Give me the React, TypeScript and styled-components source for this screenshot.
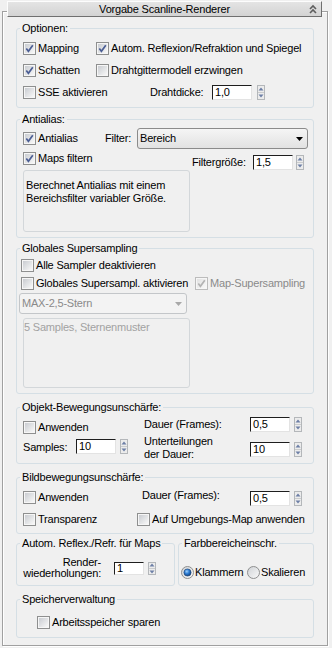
import React, { useId } from 'react';
import styled, { createGlobalStyle } from 'styled-components';

const GlobalStyle = createGlobalStyle`
  html, body {
    margin: 0;
    padding: 0;
    background: #f0f0f0;
  }
  body {
    font-family: "Liberation Sans", Arial, sans-serif;
    font-size: 11px;
    line-height: 13px;
    letter-spacing: -0.2px;
    color: #000;
  }
  * {
    box-sizing: border-box;
  }
`;

const Page = styled.div`
  width: 332px;
  height: 648px;
  padding-top: 1px;
  overflow: hidden;
`;

const Header = styled.div`
  position: relative;
  z-index: 1;
  display: grid;
  grid-template-columns: 1fr auto 1fr;
  align-items: center;
  height: 16px;
  margin: 0 10px 0 7px;
  padding: 0 4px;
  border: 1px solid;
  border-color: #fdfdfd #6f6f6f #6f6f6f #fdfdfd;
  background: linear-gradient(#e4e4e4, #d3d3d3);
`;

const HeaderTitle = styled.span`
  grid-column: 2;
  white-space: nowrap;
`;

const CollapseIcon = styled.svg`
  grid-column: 3;
  justify-self: end;
`;

const Frame = styled.div`
  margin: -6px 4px 0 2px;
  padding: 10px 13px 7px;
  border: 1px solid #a0a0a0;
  box-shadow: 1px 1px 0 #fff, inset 1px 1px 0 #fff;
`;

const Group = styled.fieldset<{ $mt?: number; $pb?: number; $w?: number }>`
  margin: ${({ $mt = 0 }) => $mt}px 0 0;
  padding: 0 0 ${({ $pb = 0 }) => $pb}px;
  width: ${({ $w }) => ($w ? `${$w}px` : 'auto')};
  min-width: 0;
  border: 1px solid #d5dfe5;
  border-radius: 3px;
`;

const Legend = styled.legend`
  margin-left: 3px;
  padding: 0 2px;
  line-height: 13px;
  white-space: nowrap;
`;

const Pair = styled.div`
  display: flex;
  gap: 3px;
  margin-top: 3px;
`;

const Row = styled.div<{ $h: number; $mt?: number; $pl?: number; $top?: boolean; $gap?: number }>`
  display: flex;
  align-items: ${({ $top }) => ($top ? 'flex-start' : 'center')};
  gap: ${({ $gap = 0 }) => $gap}px;
  height: ${({ $h }) => $h}px;
  margin-top: ${({ $mt = 0 }) => $mt}px;
  padding-left: ${({ $pl = 6 }) => $pl}px;
`;

const Cell = styled.div<{ $w?: number; $mt?: number; $right?: boolean }>`
  display: flex;
  align-items: center;
  justify-content: ${({ $right }) => ($right ? 'flex-end' : 'flex-start')};
  flex: none;
  width: ${({ $w }) => ($w ? `${$w}px` : 'auto')};
  margin-top: ${({ $mt = 0 }) => $mt}px;
  white-space: nowrap;
`;

const MultiLine = styled.span<{ $lh?: number; $right?: boolean }>`
  display: block;
  line-height: ${({ $lh = 13 }) => $lh}px;
  text-align: ${({ $right }) => ($right ? 'right' : 'left')};
`;

const ToggleLabel = styled.label<{ $disabled?: boolean; $gap?: number }>`
  display: inline-flex;
  align-items: center;
  gap: ${({ $gap = 2 }) => $gap}px;
  color: ${({ $disabled }) => ($disabled ? '#8a8a8a' : '#000')};
  white-space: nowrap;
`;

const NumField = styled.div<{ $w: number; $h: number }>`
  display: flex;
  align-items: center;
  width: ${({ $w }) => $w}px;
  height: ${({ $h }) => $h}px;
  padding-left: 2px;
  background: #fff;
  border: 1px solid;
  border-color: #1e1e1e #e3e3e3 #e3e3e3 #1e1e1e;
  line-height: 13px;
`;

const SpinWrap = styled.div<{ $gap: number }>`
  display: flex;
  align-items: center;
  gap: ${({ $gap }) => $gap}px;
`;

const Select = styled.div<{ $w: number; $disabled?: boolean }>`
  display: flex;
  align-items: center;
  justify-content: space-between;
  width: ${({ $w }) => $w}px;
  height: 21px;
  padding: 0 4px 0 2px;
  border: 1px solid ${({ $disabled }) => ($disabled ? '#c3c6c9' : '#8b8b8b')};
  border-radius: 3px;
  background: ${({ $disabled }) => ($disabled ? '#f3f3f3' : 'linear-gradient(#f5f5f5, #e2e2e2)')};
  color: ${({ $disabled }) => ($disabled ? '#8a8a8a' : '#000')};
`;

const InfoBox = styled.div<{ $h: number; $mt?: number; $pt: number; $pl: number; $disabled?: boolean }>`
  width: 167px;
  height: ${({ $h }) => $h}px;
  margin: ${({ $mt = 0 }) => $mt}px 0 0 6px;
  padding: ${({ $pt }) => $pt}px 2px 0 ${({ $pl }) => $pl}px;
  border: 1px solid #d3d7da;
  border-radius: 3px;
  color: ${({ $disabled }) => ($disabled ? '#a2a2a2' : '#000')};
  line-height: 13px;
`;

const cleanId = (id: string) => 'g' + id.replace(/[^a-zA-Z0-9]/g, '');

const CheckBox: React.FC<{ checked?: boolean; disabled?: boolean }> = ({ checked, disabled }) => {
  const id = cleanId(useId());
  return (
    <svg width="13" height="13" viewBox="0 0 13 13">
      <defs>
        <linearGradient id={id} x1="0" y1="0" x2="1" y2="1">
          <stop offset="0" stopColor={disabled ? '#e2e2e2' : '#c9ccd1'} />
          <stop offset="1" stopColor="#f8f8f8" />
        </linearGradient>
      </defs>
      <rect x="0.5" y="0.5" width="12" height="12" fill="#f6f6f6" stroke={disabled ? '#bcbcbc' : '#8e8f8f'} />
      <rect x="2" y="2" width="9" height="9" fill={`url(#${id})`} />
      {checked && (
        <path
          d="M3.3 6.6 L5.4 9.3 L9.8 3.2"
          fill="none"
          stroke={disabled ? '#b3b3b3' : '#4b5e94'}
          strokeWidth="1.7"
        />
      )}
    </svg>
  );
};

const Check: React.FC<{ label: string; checked?: boolean; disabled?: boolean }> = ({ label, checked, disabled }) => (
  <ToggleLabel $disabled={disabled}>
    <CheckBox checked={checked} disabled={disabled} />
    <span>{label}</span>
  </ToggleLabel>
);

const Radio: React.FC<{ label: string; checked?: boolean }> = ({ label, checked }) => {
  const id = cleanId(useId());
  return (
    <ToggleLabel $gap={1}>
      <svg width="13" height="13" viewBox="0 0 13 13">
        <defs>
          <linearGradient id={`${id}b`} x1="0" y1="0" x2="1" y2="1">
            <stop offset="0" stopColor="#cfd2d6" />
            <stop offset="1" stopColor="#fafafa" />
          </linearGradient>
          <radialGradient id={`${id}d`} cx="0.4" cy="0.35" r="0.7">
            <stop offset="0" stopColor="#9fd0fb" />
            <stop offset="0.45" stopColor="#2f7fd6" />
            <stop offset="1" stopColor="#0b3b78" />
          </radialGradient>
        </defs>
        <circle cx="6.5" cy="6.5" r="6" fill={`url(#${id}b)`} stroke="#8e8f8f" />
        {checked && <circle cx="6.5" cy="6.5" r="3.6" fill={`url(#${id}d)`} stroke="#1c3f6e" strokeWidth="0.6" />}
      </svg>
      <span>{label}</span>
    </ToggleLabel>
  );
};

const SpinArrows: React.FC<{ h: number }> = ({ h }) => {
  const mid = Math.floor(h / 2);
  return (
    <svg width="8" height={h} viewBox={`0 0 8 ${h}`}>
      <rect x="0.5" y="0.5" width="7" height={h - 1} fill="#ececec" stroke="#b4b7ba" />
      <line x1="1" y1={mid + 0.5} x2="7" y2={mid + 0.5} stroke="#c9cbcd" />
      <polygon points={`1.5,${mid - 1.5} 4,${mid - 4.5} 6.5,${mid - 1.5}`} fill="#6d7fa6" />
      <polygon points={`1.5,${mid + 2.5} 4,${mid + 5.5} 6.5,${mid + 2.5}`} fill="#6d7fa6" />
    </svg>
  );
};

const Spinner: React.FC<{ value: string; w?: number; h?: number; gap?: number }> = ({
  value,
  w = 40,
  h = 15,
  gap = 4,
}) => (
  <SpinWrap $gap={gap}>
    <NumField $w={w} $h={h}>{value}</NumField>
    <SpinArrows h={h} />
  </SpinWrap>
);

const DropArrow: React.FC<{ disabled?: boolean }> = ({ disabled }) => (
  <svg width="7" height="4" viewBox="0 0 7 4">
    <polygon points="0,0 7,0 3.5,4" fill={disabled ? '#a8a8a8' : '#000'} />
  </svg>
);

const App: React.FC = () => (
  <>
    <GlobalStyle />
    <Page>
      <Header>
        <HeaderTitle>Vorgabe Scanline-Renderer</HeaderTitle>
        <CollapseIcon width="8" height="10" viewBox="0 0 8 10">
          <polyline points="1,5 4,2 7,5" fill="none" stroke="#5e5e5e" strokeWidth="1.6" />
          <polyline points="1,9 4,6 7,9" fill="none" stroke="#5e5e5e" strokeWidth="1.6" />
        </CollapseIcon>
      </Header>
      <Frame>
        <Group $pb={4}>
          <Legend>Optionen:</Legend>
          <Row $h={22} $mt={2}>
            <Cell $w={73}><Check label="Mapping" checked /></Cell>
            <Cell><Check label="Autom. Reflexion/Refraktion und Spiegel" checked /></Cell>
          </Row>
          <Row $h={22}>
            <Cell $w={73}><Check label="Schatten" checked /></Cell>
            <Cell><Check label="Drahtgittermodell erzwingen" /></Cell>
          </Row>
          <Row $h={22}>
            <Cell $w={127}><Check label="SSE aktivieren" /></Cell>
            <Cell $w={62}>Drahtdicke:</Cell>
            <Spinner value="1,0" gap={5} />
          </Row>
        </Group>

        <Group $mt={5} $pb={5}>
          <Legend>Antialias:</Legend>
          <Row $h={21} $mt={2}>
            <Cell $w={82}><Check label="Antialias" checked /></Cell>
            <Cell $w={32}>Filter:</Cell>
            <Select $w={171}>
              <span>Bereich</span>
              <DropArrow />
            </Select>
          </Row>
          <Row $h={21} $top>
            <Cell $w={169} $mt={3}><Check label="Maps filtern" checked /></Cell>
            <Cell $mt={6}>
              <Cell $w={61}>Filtergröße:</Cell>
              <Spinner value="1,5" gap={3} />
            </Cell>
          </Row>
          <InfoBox $h={62} $pt={8} $pl={2}>
            Berechnet Antialias mit einem
            <br />
            Bereichsfilter variabler Größe.
          </InfoBox>
        </Group>

        <Group $mt={4} $pb={5}>
          <Legend>Globales Supersampling</Legend>
          <Row $h={18} $mt={1} $pl={4}>
            <Check label="Alle Sampler deaktivieren" />
          </Row>
          <Row $h={18} $pl={4}>
            <Cell $w={174}><Check label="Globales Supersampl. aktivieren" /></Cell>
            <Check label="Map-Supersampling" checked disabled />
          </Row>
          <Row $h={21} $mt={1} $pl={2}>
            <Select $w={168} $disabled>
              <span>MAX-2,5-Stern</span>
              <DropArrow disabled />
            </Select>
          </Row>
          <InfoBox $h={70} $mt={4} $pt={2} $pl={0} $disabled>
            5 Samples, Sternenmuster
          </InfoBox>
        </Group>

        <Group $mt={7} $pb={1}>
          <Legend>Objekt-Bewegungsunschärfe:</Legend>
          <Row $h={22} $top>
            <Cell $w={121} $mt={7}><Check label="Anwenden" /></Cell>
            <Cell $w={106} $mt={4}>Dauer (Frames):</Cell>
            <Cell $mt={3}><Spinner value="0,5" /></Cell>
          </Row>
          <Row $h={26} $top>
            <Cell $w={53} $mt={5}>Samples:</Cell>
            <Cell $w={68} $mt={3}><Spinner value="10" /></Cell>
            <Cell $w={106} $mt={-1}>
              <MultiLine>
                Unterteilungen
                <br />
                der Dauer:
              </MultiLine>
            </Cell>
            <Cell $mt={6}><Spinner value="10" /></Cell>
          </Row>
        </Group>

        <Group $mt={7}>
          <Legend>Bildbewegungsunschärfe:</Legend>
          <Row $h={22} $top>
            <Cell $w={119} $mt={7}><Check label="Anwenden" /></Cell>
            <Cell $w={108} $mt={5}>Dauer (Frames):</Cell>
            <Cell $mt={7}><Spinner value="0,5" /></Cell>
          </Row>
          <Row $h={27} $top>
            <Cell $w={114} $mt={7}><Check label="Transparenz" /></Cell>
            <Cell $mt={7}><Check label="Auf Umgebungs-Map anwenden" /></Cell>
          </Row>
        </Group>

        <Pair>
          <Group $w={159} $pb={2}>
            <Legend>Autom. Reflex./Refr. für Maps</Legend>
            <Row $h={33} $top $pl={0} $gap={13}>
              <Cell $w={84} $mt={7} $right>
                <MultiLine $lh={11} $right>
                  Render-
                  <br />
                  wiederholungen:
                </MultiLine>
              </Cell>
              <Cell $mt={12}><Spinner value="1" w={30} h={13} /></Cell>
            </Row>
          </Group>
          <Group $w={136} $pb={2}>
            <Legend>Farbbereicheinschr.</Legend>
            <Row $h={33} $top $pl={2}>
              <Cell $w={66} $mt={16}><Radio label="Klammern" checked /></Cell>
              <Cell $mt={16}><Radio label="Skalieren" /></Cell>
            </Row>
          </Group>
        </Pair>

        <Group $mt={7} $pb={8}>
          <Legend>Speicherverwaltung</Legend>
          <Row $h={13} $mt={10} $pl={20}>
            <Check label="Arbeitsspeicher sparen" />
          </Row>
        </Group>
      </Frame>
    </Page>
  </>
);

export default App;
